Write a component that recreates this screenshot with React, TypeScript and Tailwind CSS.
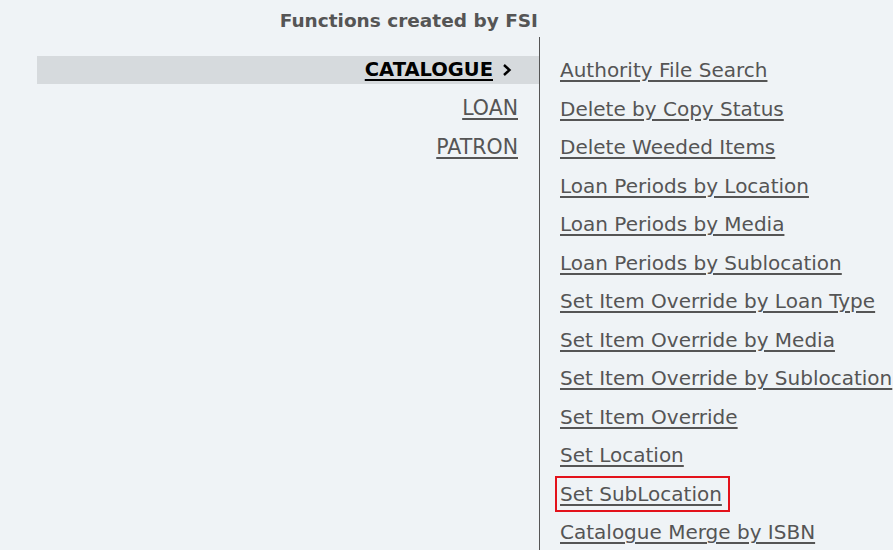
const leftItems = [
  { label: 'CATALOGUE', active: true },
  { label: 'LOAN', active: false },
  { label: 'PATRON', active: false },
];

const functions = [
  'Authority File Search',
  'Delete by Copy Status',
  'Delete Weeded Items',
  'Loan Periods by Location',
  'Loan Periods by Media',
  'Loan Periods by Sublocation',
  'Set Item Override by Loan Type',
  'Set Item Override by Media',
  'Set Item Override by Sublocation',
  'Set Item Override',
  'Set Location',
  'Set SubLocation',
  'Catalogue Merge by ISBN',
];

function Chevron() {
  return (
    <svg width="10" height="14" viewBox="0 0 10 14" className="ml-[9px]">
      <path d="M2 2 L7.5 7 L2 12" fill="none" stroke="#000" strokeWidth="2.4" />
    </svg>
  );
}

export default function App() {
  return (
    <div
      className="w-[893px] h-[550px] overflow-hidden bg-[#eff3f6] text-[#555]"
      style={{ fontFamily: '"DejaVu Sans", sans-serif' }}
    >
      <div className="w-[539px] pt-[8px] h-[37px] text-right">
        <h2 className="text-[18.5px] font-bold leading-[26px] pr-[1px]">Functions created by FSI</h2>
      </div>
      <div className="flex h-[513px]">
        <div className="w-[502px] ml-[37px] pt-[19px] flex flex-col gap-[10.54px]">
          {leftItems.map((item) =>
            item.active ? (
              <div key={item.label} className="h-[28px] bg-[#d6dadd] flex items-center justify-end pr-[27px]">
                <a href="#" className="text-[19.5px] font-bold text-black underline decoration-2 underline-offset-[3px]">
                  {item.label}
                </a>
                <Chevron />
              </div>
            ) : (
              <div key={item.label} className="h-[28px] flex items-center justify-end pr-[21px]">
                <a href="#" className="text-[20.5px] underline decoration-2 underline-offset-[3px]">
                  {item.label}
                </a>
              </div>
            )
          )}
        </div>
        <div className="w-px bg-[#555] h-full" />
        <ul className="pl-[20px] pt-[19px] flex flex-col gap-[10.54px]">
          {functions.map((f) => (
            <li key={f} className="h-[28px] flex">
              <span className="relative flex items-center">
                <a href="#" className="text-[20px] whitespace-nowrap underline decoration-2 underline-offset-[3px]">
                  {f}
                </a>
                {f === 'Set SubLocation' && (
                  <span className="absolute -left-[5px] -right-[8px] -top-[4px] -bottom-[4px] border-2 border-[#e3121b]" />
                )}
              </span>
            </li>
          ))}
        </ul>
      </div>
    </div>
  );
}
